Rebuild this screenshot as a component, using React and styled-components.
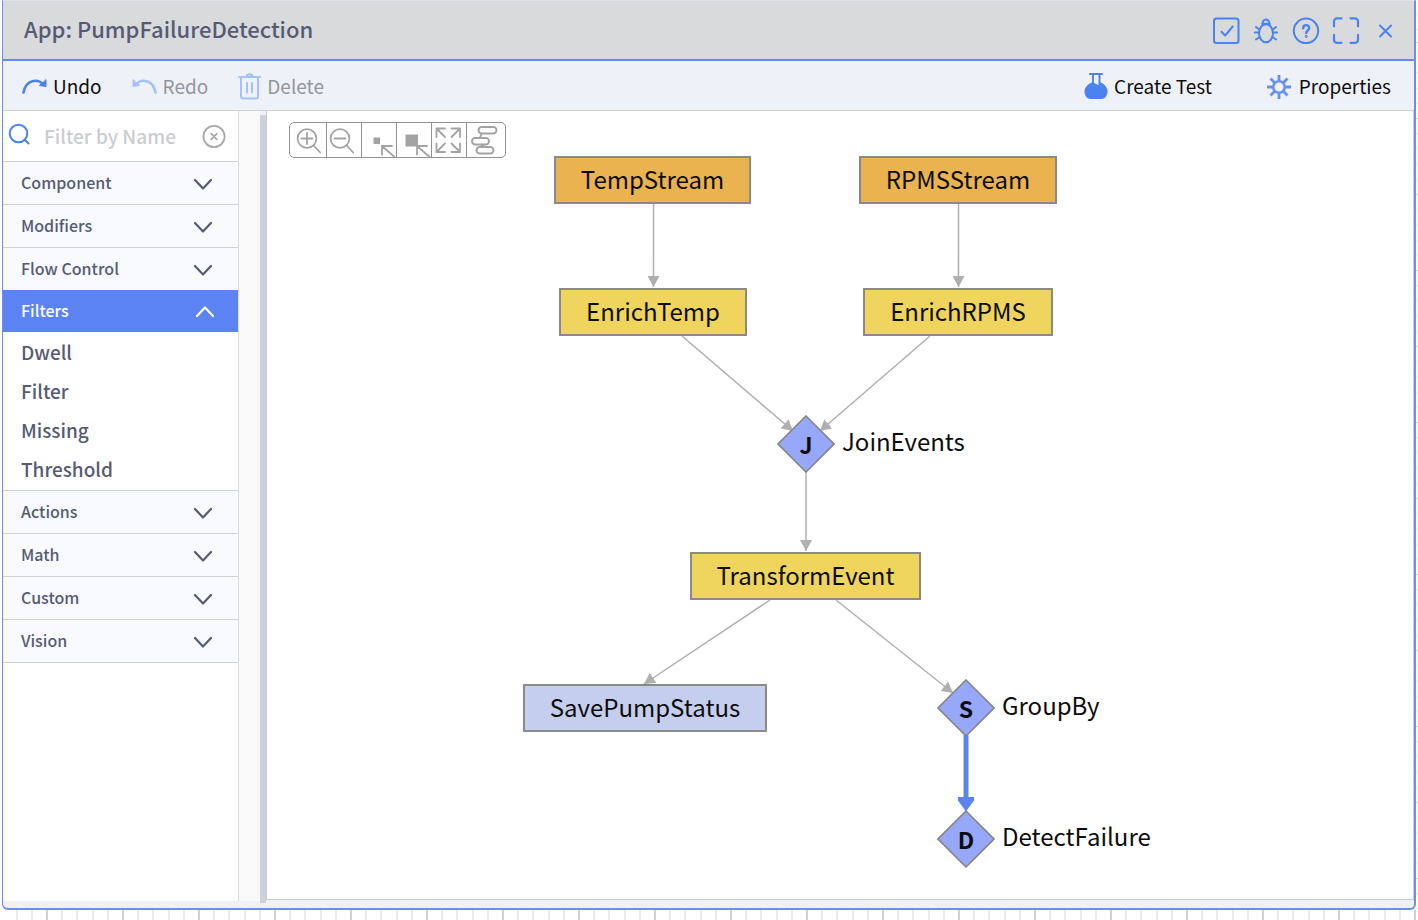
import React, { useState } from "react";
import styled, { createGlobalStyle, css } from "styled-components";

const color = {
  blue: "#4a82f0",
  accent: "#5c83f2",
  slate: "#555b74",
  line: "#cfd0d8",
  edge: "#b0b0b0",
};

const GlobalStyle = createGlobalStyle`
  *, *::before, *::after { box-sizing: border-box; }
  body {
    margin: 0;
    background: #fff;
    color: #0c0c0e;
    font-family: "Noto Sans CJK SC", "Noto Sans", sans-serif;
  }
  button, input { font: inherit; color: inherit; }
`;

/* ---------- frame ---------- */

const Page = styled.div`
  display: grid;
  grid-template-columns: minmax(0, 1fr) 2px;
  grid-template-rows: minmax(0, 1fr) 10px;
  min-height: 100vh;
  padding-left: 2px;
`;

const RightRuler = styled.div`
  background: repeating-linear-gradient(
    to bottom,
    #d4d4d8 0 1px, transparent 1px 15px,
    #ececee 15px 16px, transparent 16px 30px,
    #ececee 30px 31px, transparent 31px 46px,
    #ececee 46px 47px, transparent 47px 61px,
    #ececee 61px 62px, transparent 62px 76px
  ) 0 42px;
`;

const BottomRuler = styled.div`
  grid-column: 1 / -1;
  background: repeating-linear-gradient(
    to right,
    #d2d2d4 0 2px, transparent 2px 15px,
    #ebebed 15px 17px, transparent 17px 30px,
    #ebebed 30px 32px, transparent 32px 46px,
    #ebebed 46px 48px, transparent 48px 61px,
    #ebebed 61px 63px, transparent 63px 76px
  ) -32px 0 / calc(100% + 76px) 100% no-repeat;
`;

const Window = styled.main`
  display: flex;
  flex-direction: column;
  border: 2px solid #6a90ec;
  border-top: 1px solid #dfe1e8;
  border-left-width: 1px;
  border-radius: 0 0 6px 6px;
  background: #eff1f6;
  overflow: hidden;
`;

const TitleBar = styled.header`
  display: flex;
  align-items: center;
  justify-content: space-between;
  height: 60px;
  padding: 0 14px 0 21px;
  background: #d9dadc;
  border-bottom: 2px solid #6389ee;
`;

const Title = styled.h1`
  margin: 0;
  padding-bottom: 4px;
  color: ${color.slate};
  font-size: 22px;
  font-weight: 500;
  line-height: 32px;
`;

const TitleActions = styled.div`
  display: flex;
  align-items: center;
  gap: 12px;
`;

const IconButton = styled.button`
  display: grid;
  place-items: center;
  width: 28px;
  height: 28px;
  padding: 0;
  border: 0;
  background: none;
  color: ${color.blue};
  cursor: pointer;
`;

const Toolbar = styled.div`
  display: flex;
  align-items: center;
  justify-content: space-between;
  height: 50px;
  padding: 0 23px 0 19px;
  background: #eff1f8;
  border-bottom: 1px solid ${color.line};
`;

const ToolGroup = styled.div`
  display: flex;
  align-items: center;
  gap: ${(p) => p.$gap};
`;

const ToolButton = styled.button`
  display: flex;
  align-items: center;
  gap: 6px;
  padding: 0;
  border: 0;
  background: none;
  font-size: 19px;
  line-height: 28px;
  cursor: pointer;
  svg { color: ${color.blue}; }
  &:disabled {
    color: #94969c;
    cursor: default;
    svg { color: #a5c2f7; }
  }
`;

const Body = styled.div`
  display: flex;
  flex: 1;
  margin-bottom: 7px;
`;

/* ---------- palette ---------- */

const Sidebar = styled.aside`
  width: 236px;
  flex: none;
  background: #fff;
  border-right: 1px solid #dcdde2;
`;

const FilterBox = styled.div`
  display: flex;
  align-items: center;
  height: 50px;
  padding: 0 10px 0 5px;
  color: ${color.blue};
`;

const FilterInput = styled.input`
  flex: 1;
  min-width: 0;
  margin-left: 14px;
  padding: 0;
  border: 0;
  outline: 0;
  background: none;
  color: ${color.slate};
  font-size: 19px;
  font-weight: 500;
  line-height: 28px;
  &::placeholder { color: #cbccd0; opacity: 1; }
`;

const ClearButton = styled(IconButton)`
  color: #a9a9ac;
`;

const SectionButton = styled.button`
  display: flex;
  align-items: center;
  justify-content: space-between;
  width: 100%;
  height: 43px;
  padding: 0 26px 0 18px;
  border: 0;
  border-top: 1px solid ${color.line};
  background: #f9fafe;
  color: ${color.slate};
  font-size: 16px;
  font-weight: 500;
  line-height: 24px;
  cursor: pointer;
  ${(p) => p.$open && css`
    height: 42px;
    border-top: 0;
    background: ${color.accent};
    color: #fff;
    padding-right: 24px;
  `}
`;

const SectionLabel = styled.span`
  padding-bottom: 2px;
`;

const Palette = styled.div`
  border-bottom: 1px solid ${color.line};
`;

const ItemList = styled.ul`
  margin: 0;
  padding: 0 0 2px;
  list-style: none;
`;

const Item = styled.li`
  padding: 0 18px;
  color: ${color.slate};
  font-size: 19px;
  font-weight: 500;
  line-height: 39px;
`;

const Gutter = styled.div`
  flex: none;
  width: 21px;
  background: #f9f9fa;
`;

const Splitter = styled.div`
  flex: none;
  width: 6px;
  margin: 4px 0 -2px;
  background: #cfd1d8;
`;

/* ---------- canvas ---------- */

const Canvas = styled.section`
  position: relative;
  flex: 1;
  min-width: 0;
  min-height: 780px;
  margin-bottom: 1px;
  background: #fff;
  border: 1px solid #cbccd2;
  border-top: 0;
`;

const ViewTools = styled.div`
  position: absolute;
  top: 11px;
  left: 22px;
  display: flex;
  border: 1px solid #929292;
  border-radius: 5px;
  background: #fff;
  overflow: hidden;
`;

const ViewButton = styled.button`
  width: 36px;
  height: 34px;
  padding: 0;
  border: 0;
  background: none;
  color: #a3a3a3;
  cursor: pointer;
  & + & { width: 35px; border-left: 1px solid #929292; }
  &:last-child { width: 39px; }
  svg { display: block; }
`;

const Edges = styled.svg`
  position: absolute;
  top: 0;
  left: 0;
  width: 100%;
  height: 100%;
`;

const fills = { source: "#eab34f", step: "#efd45d", sink: "#c6ceee" };

const BoxNode = styled.div`
  position: absolute;
  left: ${(p) => p.$x}px;
  top: ${(p) => p.$y}px;
  width: ${(p) => p.$w}px;
  height: 48px;
  border: 2px solid #8c8a84;
  background: ${(p) => fills[p.$kind]};
  font-size: 24px;
  line-height: 42px;
  text-align: center;
  white-space: nowrap;
`;

const DiamondNode = styled.div`
  position: absolute;
  left: ${(p) => p.$x}px;
  top: ${(p) => p.$y}px;
  display: flex;
  align-items: center;
  gap: 7px;
  height: 58px;
  font-size: 24px;
  white-space: nowrap;
`;

const Diamond = styled.span`
  display: grid;
  place-items: center;
  width: 58px;
  height: 58px;
  font-size: 23px;
  font-weight: 700;
  line-height: 56px;
  > * { grid-area: 1 / 1; }
`;

const NodeLabel = styled.span`
  line-height: 32px;
  padding-bottom: 7px;
`;

/* ---------- icons ---------- */

const Icon = ({ w, h, sw = 2, children }) => (
  <svg width={w} height={h} viewBox={`0 0 ${w} ${h}`} fill="none" stroke="currentColor"
    strokeWidth={sw} strokeLinecap="round" strokeLinejoin="round" aria-hidden="true">
    {children}
  </svg>
);

const CheckIcon = () => (
  <Icon w={28} h={28}>
    <rect x="2" y="2.500" width="24.500" height="24.500" rx="2.500" />
    <path d="M9.500 15.800l3.700 3.700 7.500-9" />
  </Icon>
);
const BugIcon = () => (
  <Icon w={28} h={28} sw={2}>
    <ellipse cx="14" cy="17.300" rx="7" ry="9" />
    <path d="M10.300 9C10 1.800 18 1.800 17.700 9" />
    <path d="M10.800 7.800h6.400M2.800 16.500h3.700M21.500 16.500h3.700M4 11l3.500 2.700M24 11l-3.500 2.700M4 23.500l3.700-2.500M24 23.500l-3.700-2.500" />
  </Icon>
);
const HelpIcon = () => (
  <Icon w={28} h={28}>
    <circle cx="14" cy="14.800" r="12.200" />
    <path strokeWidth="2.400" d="M11.200 12.300c0-4.200 6-4 6-.4 0 2.600-3 2.600-3 5.200" />
    <circle cx="14.200" cy="20.500" r=".5" strokeWidth="1.800" />
  </Icon>
);
const FullIcon = () => (
  <Icon w={28} h={28} sw={2.200}>
    <path d="M2 10.300V5.300a3 3 0 0 1 3-3h4.500M18.500 2.300H23a3 3 0 0 1 3 3v5M26 18.800v5a3 3 0 0 1-3 3h-4.500M9.500 26.800H5a3 3 0 0 1-3-3v-5" />
  </Icon>
);
const CloseIcon = () => (
  <Icon w={28} h={28}><path d="M8 9.500l11 11M19 9.500l-11 11" /></Icon>
);
const ArcArrow = ({ back }) => (
  <Icon w={25} h={16} sw={2.600}>
    <g transform={back ? "matrix(-1 0 0 1 25 0)" : undefined}>
      <path d="M1.500 14.500C4 1 16 .5 21 6.500" />
      <path d="M24 2v6.500l-6.300-.9z" fill="currentColor" strokeWidth="1" />
    </g>
  </Icon>
);
const TrashIcon = () => (
  <Icon w={23} h={28} sw={2}>
    <path d="M1 5h21M8.500 5c0-3.800 6-3.800 6 0M3 5v19a2.500 2.500 0 0 0 2.500 2.500h12A2.500 2.500 0 0 0 20 24V5M9 11v9.500M14 11v9.500" />
  </Icon>
);
const FlaskIcon = () => (
  <Icon w={24} h={28} sw={1.900}>
    <path d="M6 2h12M9 2v9M15.500 2v11" />
    <path stroke="none" fill="currentColor" d="M8.500 10.300C4 12 .5 15.300.5 19.500c0 4 2.600 7.500 6 7.500h11c3.400 0 6-3.500 6-7.500 0-4.200-3.200-7.500-7.200-9.200l-1 3.200z" />
  </Icon>
);
const GearIcon = () => (
  <svg width="27" height="26" viewBox="-13 -14 27 26" fill="none" stroke="#6790f3" aria-hidden="true">
    <circle r="5.800" strokeWidth="2.600" />
    {[0, 45, 90, 135, 180, 225, 270, 315].map((a) => (
      <path key={a} transform={`rotate(${a})`} d="M0-6.500V-12" strokeWidth="2.800" />
    ))}
  </svg>
);
const SearchIcon = () => (
  <Icon w={22} h={26}><circle cx="10.500" cy="10.500" r="8.800" /><path d="M17 17l3.500 3.500" /></Icon>
);
const ClearIcon = () => (
  <Icon w={26} h={26} sw={1.800}>
    <circle cx="13" cy="13.500" r="10.600" /><path d="M10.200 10.700l5.600 5.600M15.800 10.700l-5.600 5.600" />
  </Icon>
);
const Chevron = ({ up }) => (
  <Icon w={20} h={14} sw={2.200}>
    <path d={up ? "M3 12l8-8.500 8 8.500" : "M3 4l8 8.500L19 4"} />
  </Icon>
);

const Magnifier = ({ plus }) => (
  <g strokeWidth="1.800">
    <circle cx="17" cy="15.500" r="9.400" />
    <path d="M11.500 15.500h11M23.700 22.500l6.500 7" />
    {plus && <path d="M17 10v11" />}
  </g>
);

const viewTools = [
  ["Zoom in", <Magnifier plus />],
  ["Zoom out", <g transform="translate(-4 0)"><Magnifier /></g>],
  ["Zoom to selection", <g strokeWidth="1.800"><path stroke="none" fill="currentColor" d="M11.500 14.500h6.500v6.500h-6.500z" /><path d="M32 33.500L20 23M20 31.500v-8.500h10" /></g>],
  ["Actual size", <g strokeWidth="1.800"><path stroke="none" fill="currentColor" d="M8.500 11.500h12.500v12H8.500z" /><path d="M32 33.500L20 23M20 31.500v-8.500h10" /></g>],
  ["Fit to window", <path strokeWidth="1.800" d="M4.500 14V5.500H13M4.500 5.500l8.500 8.500M19.500 5.500H28V14M28 5.500L19.500 14M4.500 20.500V29H13M4.500 29l8.500-8.500M19.500 29H28v-8.500M28 29l-8.500-8.500" />],
  ["Auto layout", <g strokeWidth="1.900"><rect x="11.500" y="4" width="18" height="6.500" rx="3.200" /><rect x="5" y="15" width="17" height="6.500" rx="3.200" /><rect x="9.500" y="24" width="17" height="6.500" rx="3.200" /><path d="M14.500 10.500l-1.500 4.500M14.500 21.500l3 2.500" /></g>],
];

/* ---------- data ---------- */

const sections = ["Component", "Modifiers", "Flow Control", "Filters", "Actions", "Math", "Custom", "Vision"];
const filterItems = ["Dwell", "Filter", "Missing", "Threshold"];

const boxes = [
  { name: "TempStream", kind: "source", x: 287, y: 45, w: 197 },
  { name: "RPMSStream", kind: "source", x: 592, y: 45, w: 198 },
  { name: "EnrichTemp", kind: "step", x: 292, y: 177, w: 188 },
  { name: "EnrichRPMS", kind: "step", x: 596, y: 177, w: 190 },
  { name: "TransformEvent", kind: "step", x: 423, y: 441, w: 231 },
  { name: "SavePumpStatus", kind: "sink", x: 256, y: 573, w: 244 },
];

const diamonds = [
  { name: "JoinEvents", letter: "J", x: 510, y: 304 },
  { name: "GroupBy", letter: "S", x: 670, y: 568 },
  { name: "DetectFailure", letter: "D", x: 670, y: 699 },
];

const edges = [
  "M386.500 93V176", "M691.500 93V176", "M415 225L526 320", "M663 225L553 320",
  "M539 361V440", "M503 489L377 573", "M569 489L686 582",
];

export default function App() {
  const [open, setOpen] = useState("Filters");
  const [query, setQuery] = useState("");
  return (
    <Page>
      <GlobalStyle />
      <Window>
        <TitleBar>
          <Title>App: PumpFailureDetection</Title>
          <TitleActions>
            <IconButton aria-label="Validate"><CheckIcon /></IconButton>
            <IconButton aria-label="Debug"><BugIcon /></IconButton>
            <IconButton aria-label="Help"><HelpIcon /></IconButton>
            <IconButton aria-label="Full screen"><FullIcon /></IconButton>
            <IconButton aria-label="Close"><CloseIcon /></IconButton>
          </TitleActions>
        </TitleBar>
        <Toolbar>
          <ToolGroup $gap="30px">
            <ToolButton><ArcArrow />Undo</ToolButton>
            <ToolButton disabled><ArcArrow back />Redo</ToolButton>
            <ToolButton disabled><TrashIcon />Delete</ToolButton>
          </ToolGroup>
          <ToolGroup $gap="54px">
            <ToolButton><FlaskIcon />Create Test</ToolButton>
            <ToolButton><GearIcon />Properties</ToolButton>
          </ToolGroup>
        </Toolbar>
        <Body>
          <Sidebar>
            <FilterBox>
              <SearchIcon />
              <FilterInput aria-label="Filter by Name" placeholder="Filter by Name"
                value={query} onChange={(e) => setQuery(e.target.value)} />
              <ClearButton aria-label="Clear filter" onClick={() => setQuery("")}><ClearIcon /></ClearButton>
            </FilterBox>
            <Palette>
              {sections.map((name) => (
                <React.Fragment key={name}>
                  <SectionButton $open={open === name} aria-expanded={open === name}
                    onClick={() => setOpen(open === name ? "" : name)}>
                    <SectionLabel>{name}</SectionLabel>
                    <Chevron up={open === name} />
                  </SectionButton>
                  {name === "Filters" && open === name && (
                    <ItemList>{filterItems.map((i) => <Item key={i}>{i}</Item>)}</ItemList>
                  )}
                </React.Fragment>
              ))}
            </Palette>
          </Sidebar>
          <Gutter />
          <Splitter role="separator" aria-orientation="vertical" />
          <Canvas aria-label="Application flow">
            <Edges aria-hidden="true">
              <defs>
                <marker id="arrow" markerUnits="userSpaceOnUse" markerWidth="12" markerHeight="12" refX="11" refY="6" orient="auto">
                  <path d="M0 0L11 6 0 12z" fill={color.edge} />
                </marker>
                <marker id="arrowActive" markerUnits="userSpaceOnUse" markerWidth="16" markerHeight="16" refX="3" refY="8" orient="auto">
                  <path d="M0 0h3.500L14.500 8 3.500 16H0z" fill={color.accent} />
                </marker>
              </defs>
              {edges.map((d) => (
                <path key={d} d={d} stroke={color.edge} strokeWidth="1.500" markerEnd="url(#arrow)" />
              ))}
              <path d="M699 624V689" stroke={color.accent} strokeWidth="5" markerEnd="url(#arrowActive)" />
            </Edges>
            {boxes.map((b) => (
              <BoxNode key={b.name} $x={b.x} $y={b.y} $w={b.w} $kind={b.kind}>{b.name}</BoxNode>
            ))}
            {diamonds.map((d) => (
              <DiamondNode key={d.name} $x={d.x} $y={d.y}>
                <Diamond>
                  <svg width="58" height="58" aria-hidden="true">
                    <path d="M29 1L57 29 29 57 1 29z" fill="#97a7f9" stroke="#858585" strokeWidth="1.600" />
                  </svg>
                  <span>{d.letter}</span>
                </Diamond>
                <NodeLabel>{d.name}</NodeLabel>
              </DiamondNode>
            ))}
            <ViewTools role="toolbar" aria-label="View">
              {viewTools.map(([label, drawing]) => (
                <ViewButton key={label} aria-label={label}>
                  <Icon w={35} h={34}>{drawing}</Icon>
                </ViewButton>
              ))}
            </ViewTools>
          </Canvas>
        </Body>
      </Window>
      <RightRuler />
      <BottomRuler />
    </Page>
  );
}
